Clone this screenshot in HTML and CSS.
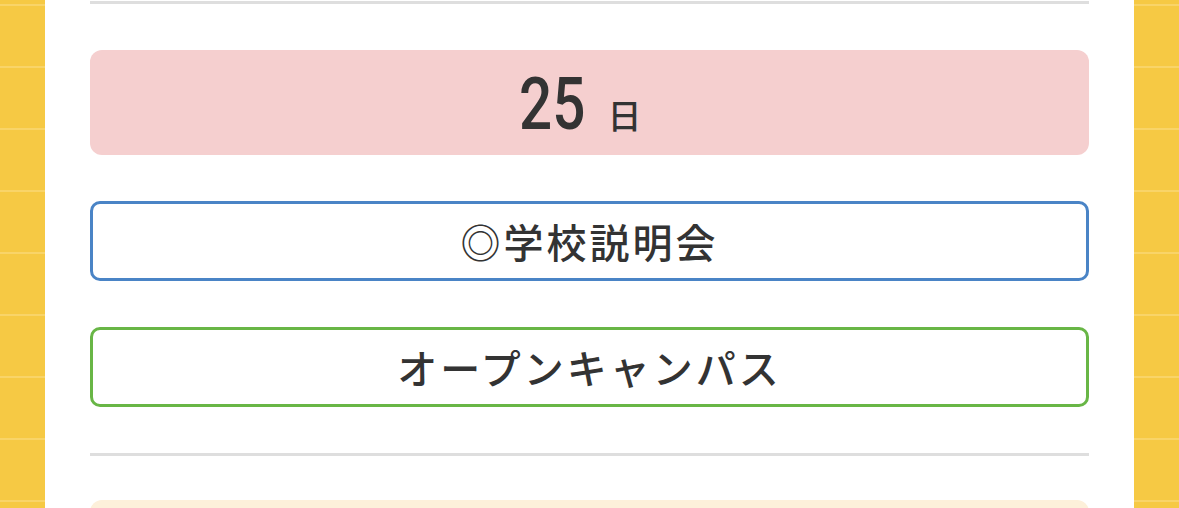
FILE: index.html
```html
<!DOCTYPE html>
<html lang="ja">

<head>
    <meta charset="UTF-8">
    <meta name="viewport" content="width=device-width, initial-scale=1.0">
    <title>イベントカレンダー</title>
    <link rel="stylesheet" href="styles.css">
</head>

<body>
    <main class="sheet">
        <hr class="divider">

        <div class="day">
            <span class="day-num">25</span>
            <span class="day-unit">日</span>
        </div>

        <a class="event event-blue" href="#">◎学校説明会</a>
        <a class="event event-green" href="#">オープンキャンパス</a>

        <hr class="divider">

        <div class="day day-next"></div>
    </main>
</body>

</html>
```

FILE: styles.css
```css
/* page */
html,
body {
    height: 100%;
}

body {
    margin: 0;
    padding: 0 45px;
    background-color: #f6c944;
    background-image: repeating-linear-gradient(to bottom,
            transparent 0, transparent 4px,
            #f9d468 4px, #f9d468 6px,
            transparent 6px, transparent 62px);
    font-family: "Noto Sans CJK JP", "Noto Sans", sans-serif;
    color: #333333;
    overflow: hidden;
}

.sheet {
    background-color: #ffffff;
    min-height: 100%;
    padding: 1px 45px 0 45px;
    display: flex;
    flex-direction: column;
    gap: 46px;
}

.divider {
    margin: 0;
    border: none;
    height: 3px;
    background-color: #dedede;
}

.divider + .day-next {
    margin-top: -2px;
}

.day {
    height: 105px;
    border-radius: 12px;
    background-color: #f5cfcf;
    display: flex;
    justify-content: center;
    align-items: baseline;
    gap: 6px;
    padding: 4px 19px 0 0;
    box-sizing: border-box;
}

.day-num {
    display: inline-block;
    font-family: Roboto, "DejaVu Sans", sans-serif;
    font-weight: 500;
    font-size: 73px;
    line-height: 100px;
    color: #333333;
    transform: scaleX(0.8);
    transform-origin: left center;
}

.day-unit {
    font-size: 34px;
    font-weight: 500;
}

.day-next {
    background-color: #fdf0da;
}

.event {
    display: flex;
    justify-content: center;
    align-items: center;
    height: 80px;
    box-sizing: border-box;
    border: 3px solid;
    border-radius: 10px;
    font-size: 40px;
    font-weight: 500;
    letter-spacing: 3px;
    color: #333333;
    text-decoration: none;
}

.event-blue {
    border-color: #4a84c6;
}

.event-green {
    border-color: #68b646;
}
```
